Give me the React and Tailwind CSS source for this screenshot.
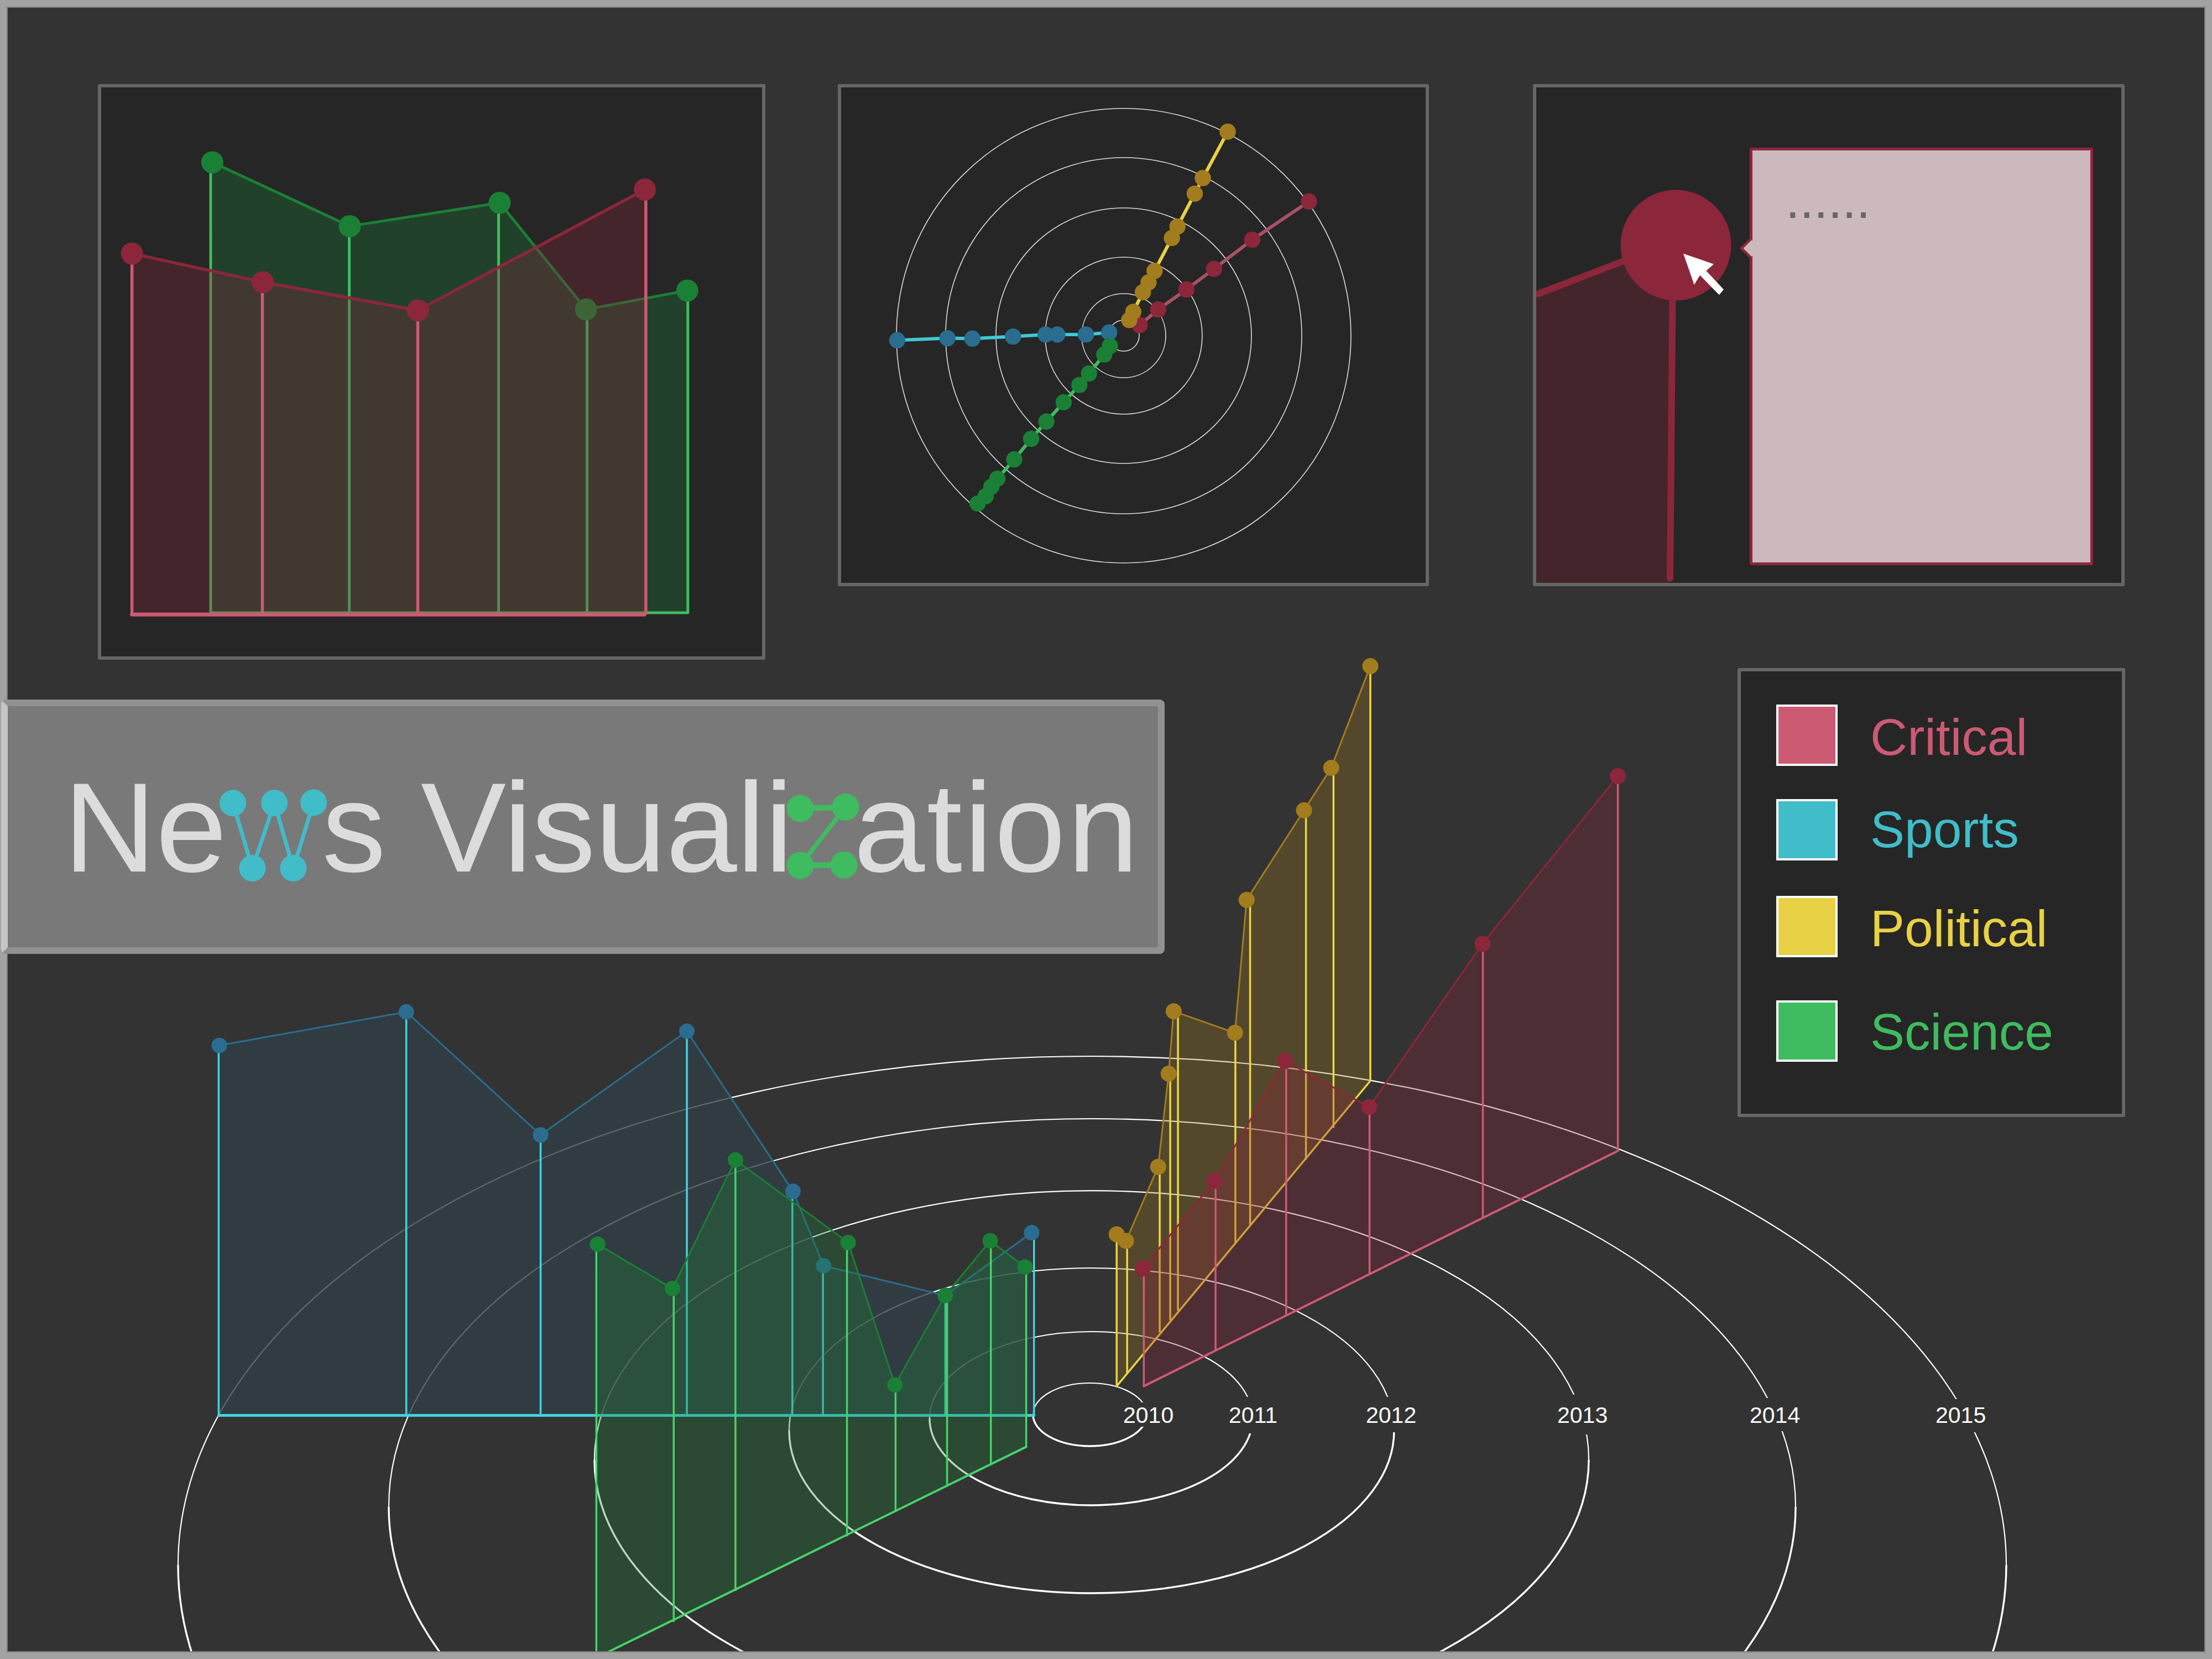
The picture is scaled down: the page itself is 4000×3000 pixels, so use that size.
import React from "react";

const R = "#8b263b", RS = "#cb5a72", G = "#1a8035", GS = "#3fbb60", B = "#2a6d90", BS = "#40c9d4", Y = "#a37c1e", YS = "#e9d146";
const FONT = "font-['Liberation_Sans',Arial,sans-serif]";

const mk = (ox, oy, sx, sy) => (x, y) => [+(ox + x / sx).toFixed(1), +(oy + y / sy).toFixed(1)];
const z1 = mk(0, 0, 1.0814, 1.2544);
const z2 = mk(1480, 120, 1.3754, 1.6333);
const z3 = mk(2740, 120, 1.3288, 1.6333);
const z6 = mk(300, 1780, 0.9224, 1.2852);
const z7 = mk(1900, 1150, 1.4255, 1.0814);
const pts = (a) => a.map((p) => p.join(",")).join(" ");

function Area({ conv, rows, base, fill, fillOpacity, line, stem, dot, r, lw, sw, bw }) {
  // rows: [dotX, dotY, stemX, stemBottomY]
  const dots = rows.map((d) => conv(d[0], d[1]));
  const poly = [...dots, conv(base[1][0], base[1][1]), conv(base[0][0], base[0][1])];
  return (
    <g>
      <polygon points={pts(poly)} fill={fill} fillOpacity={fillOpacity} />
      {rows.map((d, i) => {
        const a = conv(d[2], d[1]);
        const b = conv(d[2], d[3]);
        return <line key={i} x1={a[0]} y1={a[1]} x2={b[0]} y2={b[1]} stroke={stem} strokeWidth={sw} />;
      })}
      <line x1={conv(...base[0])[0]} y1={conv(...base[0])[1]} x2={conv(...base[1])[0]} y2={conv(...base[1])[1]} stroke={stem} strokeWidth={bw} strokeLinecap="round" />
      <polyline points={pts(dots)} fill="none" stroke={line} strokeWidth={lw} />
      {dots.map((p, i) => <circle key={i} cx={p[0]} cy={p[1]} r={r} fill={dot} />)}
    </g>
  );
}

const rings = [
  { rx: 103, ry: 57, cy: 2558, cx: 1971 },
  { rx: 292, ry: 157, cy: 2565, cx: 1973 },
  { rx: 547, ry: 294, cy: 2587, cx: 1974 },
  { rx: 899, ry: 487, cy: 2640, cx: 1974 },
  { rx: 1272, ry: 702, cy: 2725, cx: 1975 },
  { rx: 1653, ry: 920, cy: 2830, cx: 1975 },
];

const labels = [
  ["2010", 2031, 2536, 2580],
  ["2011", 2222, 2526, 2592],
  ["2012", 2470, 2526, 2590],
  ["2013", 2816, 2522, 2594],
  ["2014", 3164, 2528, 2588],
  ["2015", 3500, 2530, 2590],
];

const blueRows = [
  [89, 142, 88, 1002], [401, 64, 401, 1002], [625, 350, 625, 1002], [869, 109, 869, 1002],
  [1046, 481, 1045, 1002], [1097, 654, 1096, 1002], [1300, 723, 1300, 1002], [1444, 577, 1448, 1002],
];
const greenRows = [
  [720, 604, 718, 1565], [845, 707, 847, 1482], [950, 408, 950, 1410], [1138, 600, 1136, 1283],
  [1216, 931, 1217, 1226], [1300, 723, 1303, 1166], [1375, 596, 1376, 1115], [1433, 657, 1435, 1075],
];
const yellowRows = [
  [170, 1170, 170, 1467], [194, 1183, 197, 1442], [277, 1038, 281, 1362], [304, 856, 308, 1338], [317, 734, 328, 1320],
  [475, 776, 476, 1188], [505, 516, 514, 1153], [653, 341, 658, 1024], [723, 258, 729, 962], [824, 59, 824, 870],
];
const redRows = [
  [237, 1237, 240, 1467], [422, 1066, 425, 1397], [604, 831, 607, 1328], [821, 921, 822, 1247], [1113, 602, 1114, 1137], [1462, 274, 1462, 1007],
];

function BigChart() {
  return (
    <svg className="absolute inset-0 w-[4000px] h-[3000px]" viewBox="0 0 4000 3000">
      {rings.map((e, i) => (
        <g key={i} fill="none" stroke="#fff">
          <path d={`M${e.cx - e.rx} ${e.cy}A${e.rx} ${e.ry} 0 0 1 ${e.cx + e.rx} ${e.cy}`} strokeWidth="2.2" />
          <path d={`M${e.cx - e.rx} ${e.cy}A${e.rx} ${e.ry} 0 0 0 ${e.cx + e.rx} ${e.cy}`} strokeWidth="3.4" />
        </g>
      ))}
      {labels.map(([t, x, y0, y1]) => <rect key={t} x={x} y={y0} width="93" height={y1 - y0} fill="#333" />)}
      <Area conv={z6} rows={blueRows} base={[[88, 1002], [1448, 1002]]} fill="#2f3f47" fillOpacity={0.78} line="#2a6d90" stem="#41d4de" dot={B} r={14} lw={3} sw={3.5} bw={5} />
      <Area conv={z6} rows={greenRows} base={[[718, 1565], [1435, 1075]]} fill="#1f8035" fillOpacity={0.3} line="#1a8035" stem="#46d36b" dot={G} r={14} lw={3} sw={3.5} bw={4} />
      <Area conv={z7} rows={yellowRows} base={[[170, 1467], [824, 870]]} fill={Y} fillOpacity={0.3} line={Y} stem="#eed63f" dot={Y} r={14.5} lw={3} sw={3.5} bw={3.5} />
      <Area conv={z7} rows={redRows} base={[[240, 1467], [1462, 1007]]} fill={R} fillOpacity={0.3} line={R} stem="#d0597a" dot={R} r={14.5} lw={3} sw={3.5} bw={4} />
      {labels.map(([t, x]) => (
        <text key={t} x={x} y="2573" fill="#fff" fontSize="41" fontFamily="'Liberation Sans', Arial, sans-serif">{t}</text>
      ))}
    </svg>
  );
}

function Panel1Chart() {
  const g = [[415, 368, 412], [684, 513, 683], [977, 460, 975], [1146, 702, 1148], [1344, 659, 1345]].map((d) => [...d, 1390]);
  const r = [[258, 575, 258], [514, 640, 513], [817, 704, 817], [1261, 430, 1263]].map((d) => [...d, 1394]);
  return (
    <svg className="w-full h-full" viewBox="183 158 1195 1029">
      <Area conv={z1} rows={g} base={[[412, 1390], [1345, 1390]]} fill={G} fillOpacity={0.3} line={G} stem={GS} dot={G} r={20} lw={5} sw={5} bw={5} />
      <Area conv={z1} rows={r} base={[[258, 1394], [1260, 1394]]} fill={R} fillOpacity={0.3} line={R} stem={RS} dot={R} r={20} lw={5.5} sw={5.5} bw={7} />
    </svg>
  );
}

const radial = [
  [R, "#a85168", [[799, 764], [845, 718], [915, 659], [984, 598], [1079, 512], [1220, 399]]],
  [Y, YS, [[773, 749], [783, 725], [807, 667], [821, 638], [836, 604], [879, 507], [893, 473], [936, 376], [956, 330], [1018, 193]]],
  [B, BS, [[196, 809], [321, 803], [383, 804], [484, 798], [565, 792], [594, 792], [665, 792], [723, 786]]],
  [G, GS, [[396, 1291], [416, 1269], [430, 1242], [445, 1218], [487, 1161], [529, 1100], [567, 1049], [610, 992], [649, 941], [673, 907], [711, 851], [725, 826]]],
];

function Panel2Chart() {
  return (
    <svg className="w-full h-full" viewBox="1521 158 1057 896">
      {[28, 76, 142, 231, 322, 411].map((r) => <circle key={r} cx="2032" cy="607" r={r} fill="none" stroke="#ddd" strokeWidth="1.6" />)}
      {radial.map(([dot, line, list], i) => {
        const p = list.map((d) => z2(d[0], d[1]));
        return (
          <g key={i}>
            <polyline points={pts(p)} fill="none" stroke={line} strokeWidth="6" />
            {p.map((q, j) => <circle key={j} cx={q[0]} cy={q[1]} r="14.7" fill={dot} />)}
          </g>
        );
      })}
    </svg>
  );
}

function Panel3Chart() {
  const c = z3(386, 528);
  const a = z3(55, 672), b = z3(260, 575);
  const v0 = z3(378, 690), v1 = z3(372, 1512);
  const fill = [z3(44, 680), z3(260, 580), z3(378, 690), z3(372, 1530), z3(44, 1530)];
  const cur = [[404, 553], [477, 584], [459, 604], [501, 659], [490, 675], [444, 617], [430, 645]].map((d) => z3(d[0], d[1]));
  return (
    <svg className="w-full h-full" viewBox="2778 158 1058 896">
      <polygon points={pts(fill)} fill="#44252c" />
      <line x1={a[0]} y1={a[1]} x2={b[0]} y2={b[1]} stroke={R} strokeWidth="12" strokeLinecap="round" />
      <line x1={v0[0]} y1={v0[1]} x2={v1[0]} y2={v1[1]} stroke={R} strokeWidth="12" strokeLinecap="round" />
      <circle cx={c[0]} cy={c[1]} r="100" fill={R} />
      <polygon points={pts(cur)} fill="#fff" />
    </svg>
  );
}

function LetterW() {
  const p = [[421.7, 1453], [457, 1570.7], [496.8, 1452.7], [531, 1570.7], [567.7, 1452]];
  return (
    <svg className="w-[172px] h-[168px] shrink-0 overflow-visible" viewBox="410.6 1408.7 172 168">
      <polyline points={pts(p)} fill="none" stroke="#40bdc9" strokeWidth="7" />
      {p.map((q, i) => <circle key={i} cx={q[0]} cy={q[1]} r="24" fill="#40bdc9" />)}
    </svg>
  );
}

function LetterZ() {
  const p = [[1452, 1462.7], [1534, 1460], [1452, 1565.7], [1531, 1565]];
  return (
    <svg className="w-[110px] h-[168px] shrink-0 overflow-visible" viewBox="1439 1408.7 110 168">
      <line x1="1452" y1="1462.7" x2="1534" y2="1460" stroke="#3fbb60" strokeWidth="10" />
      <line x1="1534" y1="1460" x2="1452" y2="1565.7" stroke="#3fbb60" strokeWidth="8" />
      <line x1="1452" y1="1565.7" x2="1531" y2="1565" stroke="#3fbb60" strokeWidth="10" />
      {p.map((q, i) => <circle key={i} cx={q[0]} cy={q[1]} r="24.5" fill="#3fbb60" />)}
    </svg>
  );
}

const legend = [
  { label: "Critical", color: "bg-[#cb5a72]", text: "text-[#cb5a72] pt-[8px]", gap: "" },
  { label: "Sports", color: "bg-[#40bdc9]", text: "text-[#40bdc9]", gap: "mt-[60px]" },
  { label: "Political", color: "bg-[#e9d146]", text: "text-[#e9d146] pt-[8px]", gap: "mt-[64px]" },
  { label: "Science", color: "bg-[#3fbb60]", text: "text-[#3fbb60] pt-[4px]", gap: "mt-[78px]" },
];

export default function App() {
  return (
    <div className={`relative w-[4000px] h-[3000px] overflow-hidden bg-[#333333] ${FONT}`}>
      <BigChart />
      <div className="pointer-events-none absolute inset-0 border-[12px] border-[#a2a2a2] shadow-[inset_0_0_0_2px_#7f7f7f]" />

      <div className="relative flex flex-col pt-[152px]">
        <div className="flex items-start h-[1041px]">
          <div className="ml-[177px] w-[1207px] h-[1041px] overflow-hidden rounded-[3px] border-[6px] border-[#666666] bg-[#262626]">
            <Panel1Chart />
          </div>
          <div className="ml-[131px] w-[1069px] h-[908px] overflow-hidden rounded-[3px] border-[6px] border-[#666666] bg-[#262626]">
            <Panel2Chart />
          </div>
          <div className="relative ml-[188px] w-[1070px] h-[908px] overflow-hidden rounded-[3px] border-[6px] border-[#666666] bg-[#262626]">
            <Panel3Chart />
            <div className="absolute left-[386px] top-[109px] w-[621px] h-[755px] rounded-[3px] border-[5px] border-[#8b263b] bg-[#cbb9bd] pl-[60px] pt-[44px]">
              <div className="text-[92px] leading-none text-[#666666]">......</div>
              <div className="absolute left-[-18px] top-[164px] w-[26px] h-[26px] rotate-45 rounded-[2px] border-b-[5px] border-l-[5px] border-[#8b263b] bg-[#cbb9bd]" />
            </div>
          </div>
        </div>

        <div className="flex items-start justify-between">
          <div className="ml-[2px] mt-[72px] flex h-[460px] w-[2104px] items-baseline rounded-[9px] border-[12px] border-[#919191] border-l-[#c6c6c6] bg-[#797979] pl-[101px] pt-[104px] text-[231px] leading-none text-[#dcdcdc]">
            <span>Ne</span>
            <LetterW />
            <span className="whitespace-pre tracking-[-0.5px]">s Visuali</span>
            <LetterZ />
            <span className="tracking-[3.5px]">ation</span>
          </div>
          <div className="mr-[157px] mt-[15px] flex h-[812px] w-[701px] flex-col rounded-[3px] border-[6px] border-[#666666] bg-[#262626] pl-[64px] pt-[60px]">
            {legend.map((l) => (
              <div key={l.label} className={`flex items-center ${l.gap}`}>
                <div className={`h-[111px] w-[111px] border-[4px] border-white ${l.color}`} />
                <div className={`ml-[59px] text-[93px] leading-none ${l.text}`}>{l.label}</div>
              </div>
            ))}
          </div>
        </div>
      </div>
    </div>
  );
}
